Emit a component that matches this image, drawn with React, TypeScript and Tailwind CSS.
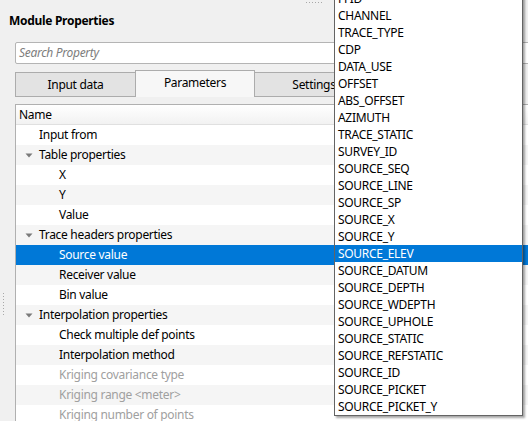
import React from "react";

const font = { fontFamily: '"Noto Sans", "Open Sans", sans-serif', letterSpacing: "-0.3px" };

type Row = { label: string; level: 0 | 1; group?: boolean; disabled?: boolean; selected?: boolean };

const rows: Row[] = [
  { label: "Input from", level: 0 },
  { label: "Table properties", level: 0, group: true },
  { label: "X", level: 1 },
  { label: "Y", level: 1 },
  { label: "Value", level: 1 },
  { label: "Trace headers properties", level: 0, group: true },
  { label: "Source value", level: 1, selected: true },
  { label: "Receiver value", level: 1 },
  { label: "Bin value", level: 1 },
  { label: "Interpolation properties", level: 0, group: true },
  { label: "Check multiple def points", level: 1 },
  { label: "Interpolation method", level: 1 },
  { label: "Kriging covariance type", level: 1, disabled: true },
  { label: "Kriging range <meter>", level: 1, disabled: true },
  { label: "Kriging number of points", level: 1, disabled: true },
];

const options = [
  "FFID",
  "CHANNEL",
  "TRACE_TYPE",
  "CDP",
  "DATA_USE",
  "OFFSET",
  "ABS_OFFSET",
  "AZIMUTH",
  "TRACE_STATIC",
  "SURVEY_ID",
  "SOURCE_SEQ",
  "SOURCE_LINE",
  "SOURCE_SP",
  "SOURCE_X",
  "SOURCE_Y",
  "SOURCE_ELEV",
  "SOURCE_DATUM",
  "SOURCE_DEPTH",
  "SOURCE_WDEPTH",
  "SOURCE_UPHOLE",
  "SOURCE_STATIC",
  "SOURCE_REFSTATIC",
  "SOURCE_ID",
  "SOURCE_PICKET",
  "SOURCE_PICKET_Y",
];

function Caret() {
  return (
    <svg width="8" height="5" viewBox="0 0 8 5" className="shrink-0">
      <path d="M0.5 0.5 L7.5 0.5 L4 4.5 Z" fill="#7a7a7a" />
    </svg>
  );
}

export default function App() {
  return (
    <div
      className="relative w-[528px] h-[421px] overflow-hidden bg-[#f0f0f0] text-[12px] text-black"
      style={font}
    >
      {/* splitter grips */}
      <div className="absolute left-[306px] top-[2px] flex gap-[2px]">
        {[0, 1, 2, 3, 4, 5].map((i) => (
          <span key={i} className="w-[1px] h-[1px] bg-[#a8a8a8]" />
        ))}
      </div>
      <div className="absolute left-[3px] top-[293px] flex flex-col gap-[2px]">
        {[0, 1, 2, 3, 4, 5, 6, 7].map((i) => (
          <span key={i} className="w-[1px] h-[1px] bg-[#a8a8a8]" />
        ))}
      </div>

      <div className="pt-[12px] pl-[9px] font-bold text-[12px] leading-[18px]">Module Properties</div>

      <div className="pl-[15px] pt-[12px]">
        <div className="h-[22px] w-[540px] bg-white border border-[#b4b4b4] rounded-[2px] flex items-center pl-[3px] italic text-[#7d7d7d]">
          Search Property
        </div>
      </div>

      {/* tabs */}
      <div className="pl-[15px] flex items-end h-[33px]">
        <div className="w-[121px] h-[25px] border border-[#acacac] bg-[#e3e3e3] flex items-center justify-center">
          Input data
        </div>
        <div className="w-[120px] h-[27px] border border-b-0 border-[#acacac] bg-[#f7f7f7] flex items-start pt-[3px] justify-center -mx-[1px] relative z-10">
          Parameters
        </div>
        <div className="w-[120px] h-[25px] border border-[#acacac] bg-[#e3e3e3] flex items-center justify-center">
          Settings
        </div>
      </div>

      {/* tree */}
      <div className="ml-[15px] mt-[7px] w-[540px] bg-white border border-[#b0b0b0]">
        <div className="h-[20px] flex items-center pl-[3px] bg-gradient-to-b from-white to-[#f2f2f2] border-b border-[#e0e0e0]">
          Name
        </div>
        {rows.map((r, i) => (
          <div
            key={r.label}
            className={`h-[20px] flex items-center ${
              r.selected ? "bg-[#0078d7] text-white" : i % 2 === 1 ? "bg-[#f5f5f5]" : "bg-white"
            } ${r.disabled ? "text-[#a0a0a0]" : ""}`}
          >
            {r.level === 0 ? (
              <div className="flex items-center">
                <div className="w-[23px] flex justify-center pl-[2px]">{r.group ? <Caret /> : null}</div>
                <span>{r.label}</span>
              </div>
            ) : (
              <span className="pl-[43px]">{r.label}</span>
            )}
          </div>
        ))}
      </div>

      {/* dropdown list */}
      <div className="absolute left-[334px] top-[-11px] w-[189px] bg-white border border-[#646464] shadow-[2px_2px_2px_rgba(0,0,0,0.35)]">
        {options.map((o) => (
          <div
            key={o}
            className={`h-[17px] flex items-center pl-[3px] ${
              o === "SOURCE_ELEV" ? "bg-[#0078d7] text-white" : ""
            }`}
          >
            {o}
          </div>
        ))}
      </div>
    </div>
  );
}
